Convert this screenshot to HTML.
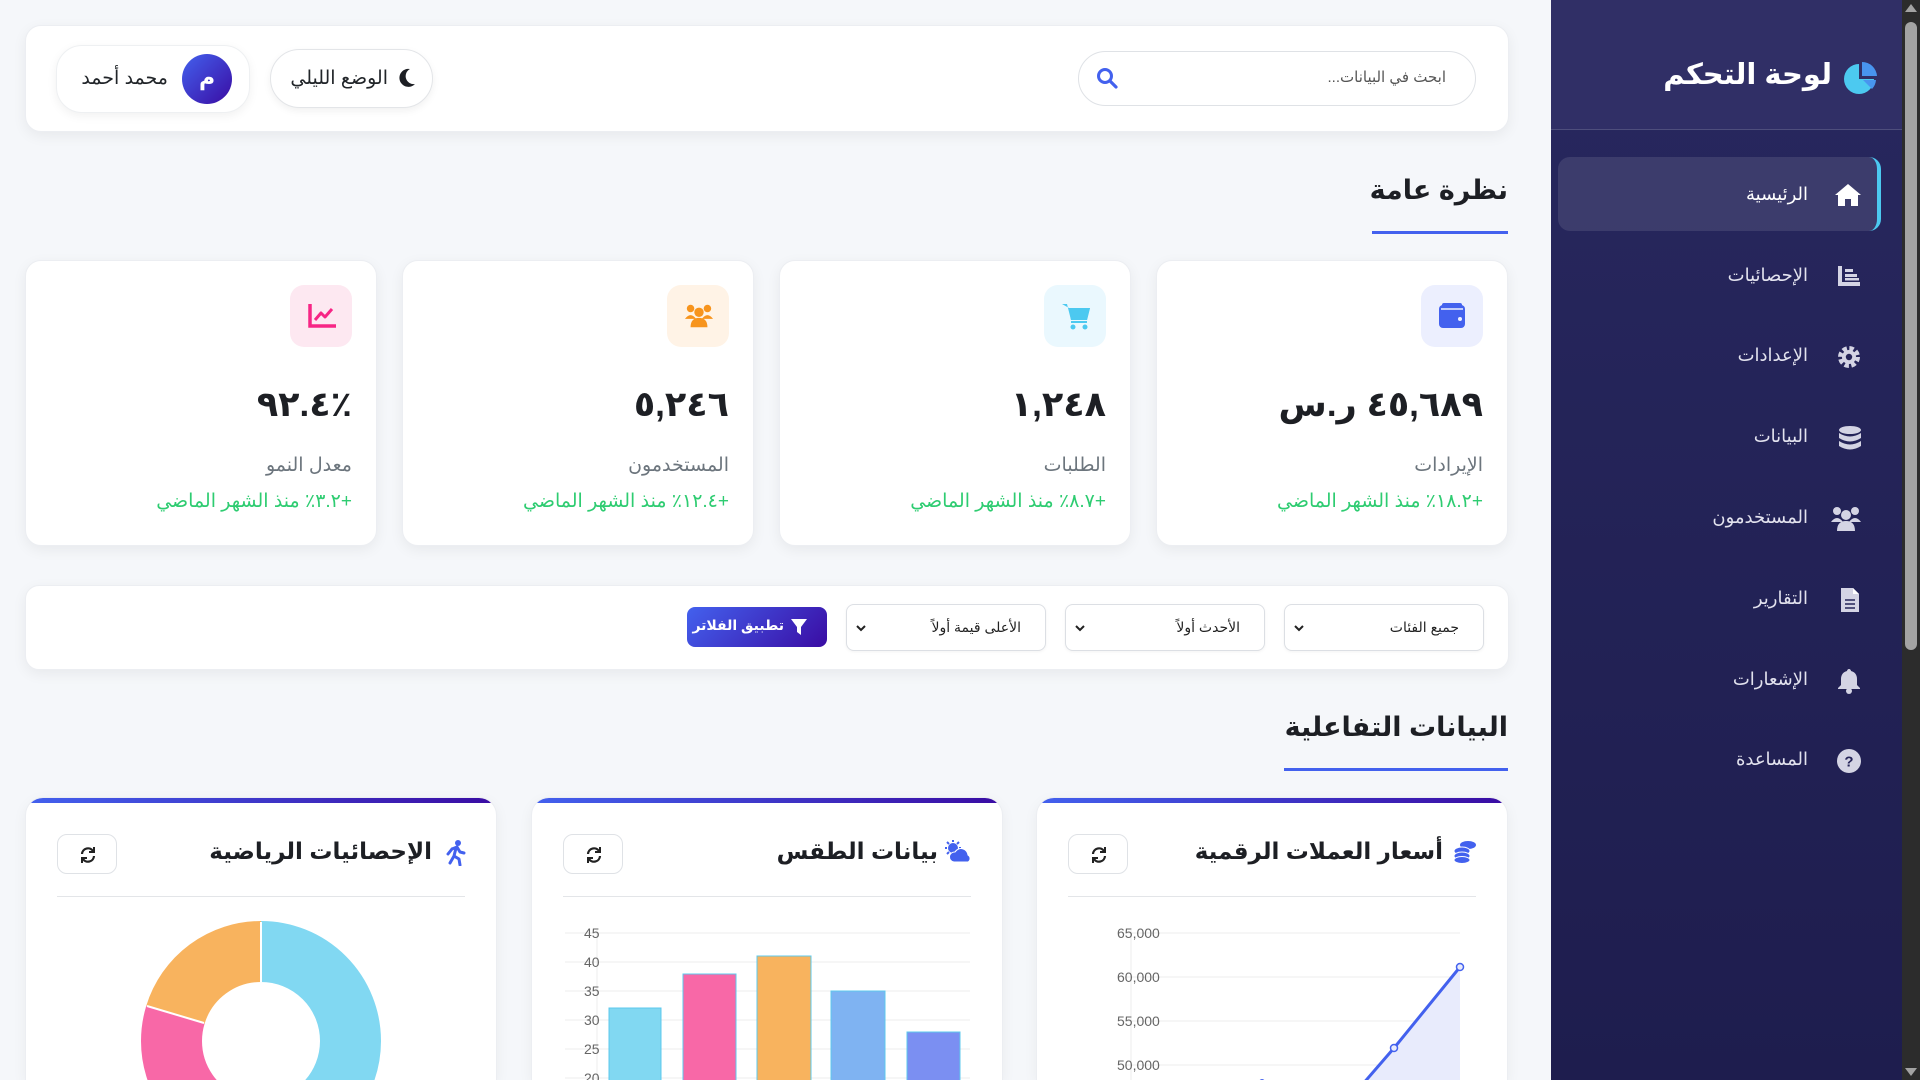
<!DOCTYPE html>
<html lang="ar" dir="rtl"><head><meta charset="utf-8">
<style>
*{box-sizing:border-box;margin:0;padding:0}
html{width:1920px;height:1080px;overflow:hidden}
body{width:1920px;height:1080px;overflow:hidden;background:#f5f7fa;font-family:"Liberation Sans","DejaVu Sans",sans-serif;color:#212529;position:relative}
.a{position:absolute}
.card{position:absolute;background:#fff;border-radius:16px;box-shadow:0 4px 14px rgba(0,0,0,.06);border:1px solid #eceef2}
.t{position:absolute;white-space:nowrap;direction:rtl}
.sb{left:1551px;top:0;width:351px;height:1080px;background:linear-gradient(180deg,#28285f,#1e1d4e)}
.nav{position:absolute;right:0;width:351px;height:40px}
.nav .tx{position:absolute;right:94px;top:9px;font-size:18px;color:#e2e2ee}
.nav svg{position:absolute;right:40px;top:8px}
.stat .ib{position:absolute;right:24px;top:24px;width:62px;height:62px;border-radius:14px}
.stat .ib svg{position:absolute;left:17px;top:17px}
.stat .v{position:absolute;right:24px;top:124px;font-size:35px;font-weight:bold;color:#1d1f24}
.stat .l{position:absolute;right:24px;top:193px;font-size:19px;color:#6c757d}
.stat .c{position:absolute;right:24px;top:229px;font-size:19px;color:#2ecc71}
.sel{position:absolute;top:604px;width:200px;height:47px;border:1px solid #dcdfe4;border-radius:8px;background:#fff;box-shadow:0 1px 3px rgba(0,0,0,.05)}
.sel .tx{position:absolute;right:24px;top:14px;font-size:14px;color:#222}
.sel .ch{position:absolute;left:8px;top:14px}
.cc{position:absolute;top:797px;width:472px;height:283px;background:#fff;border-radius:18px 18px 0 0;border:1px solid #eceef2;border-bottom:none;overflow:hidden;box-shadow:0 4px 14px rgba(0,0,0,.05)}
.cc .bar{position:absolute;left:0;right:0;top:0;height:5px;background:linear-gradient(90deg,#4361ee,#3a0ca3)}
.cc .ti{position:absolute;right:64px;top:40px;font-size:23px;font-weight:bold;color:#1d1f24}
.cc .ic{position:absolute;right:30px;top:42px}
.cc .rb{position:absolute;left:31px;top:36px;width:60px;height:40px;border:1px solid #dfe2e6;border-radius:10px;background:#fff}
.cc .rb svg{position:absolute;left:21px;top:11px}
.cc .hr{position:absolute;left:31px;right:31px;top:98px;height:1px;background:#e3e5e8}
</style></head><body>

<div class="a sb">
  <div class="a" style="left:0;top:0;width:351px;height:130px;background:#302f66;border-bottom:1px solid rgba(255,255,255,.15)"></div>
  <div class="t" style="right:70px;top:57px;font-size:29px;font-weight:bold;color:#fff">لوحة التحكم</div>
  <svg class="a" style="right:24px;top:62px" width="34" height="32" viewBox="0 0 34 32"><path d="M15 2 A15 15 0 1 0 30 17 L15 17Z" fill="#4cc9f0"/><path d="M18 0 A15 15 0 0 1 33 14 L18 14Z" fill="#4895ef"/><path d="M19 18 L32 18 A15 15 0 0 1 28 27Z" fill="#4895ef"/></svg>
  <div class="a" style="left:7px;top:157px;width:323px;height:74px;background:rgba(255,255,255,.1);border-radius:12px;border-right:4px solid #4cc9f0"></div>
  <div class="nav" style="top:175px"><svg width="28" height="24" viewBox="0 0 28 24"><path d="M14 1 L27 12 L24 12 L24 23 L17 23 L17 16 L11 16 L11 23 L4 23 L4 12 L1 12Z" fill="#fff"/></svg><div class="tx" style="color:#fff">الرئيسية</div></div>
  <div class="nav" style="top:256px"><svg width="26" height="24" viewBox="0 0 26 24"><path d="M2 2h4v16h18v4H2z M9 5h8v3H9z M9 10h12v3H9z" fill="#d4d4e4"/><rect x="9" y="14" width="14" height="2.5" fill="#d4d4e4"/></svg><div class="tx">الإحصائيات</div></div>
  <div class="nav" style="top:336px"><svg width="26" height="26" viewBox="0 0 26 26"><circle cx="13" cy="13" r="8" fill="none" stroke="#d4d4e4" stroke-width="6" stroke-dasharray="4 2.3"/><circle cx="13" cy="13" r="7" fill="#d4d4e4"/><circle cx="13" cy="13" r="3.2" fill="#252458"/></svg><div class="tx">الإعدادات</div></div>
  <div class="nav" style="top:417px"><svg width="24" height="26" viewBox="0 0 24 26"><ellipse cx="12" cy="5" rx="11" ry="4" fill="#d4d4e4"/><path d="M1 8 q11 7 22 0 v5 q-11 7 -22 0z M1 16 q11 7 22 0 v5 q-11 7 -22 0z" fill="#d4d4e4"/></svg><div class="tx">البيانات</div></div>
  <div class="nav" style="top:498px"><svg width="32" height="26" viewBox="0 0 32 26"><circle cx="7" cy="5" r="4" fill="#d4d4e4"/><circle cx="25" cy="5" r="4" fill="#d4d4e4"/><circle cx="16" cy="9" r="5" fill="#d4d4e4"/><path d="M1 16 q6 -8 12 0z M19 16 q6 -8 12 0z M7 25 q0 -10 9 -10 q9 0 9 10z" fill="#d4d4e4"/></svg><div class="tx">المستخدمون</div></div>
  <div class="nav" style="top:579px"><svg width="24" height="26" viewBox="0 0 24 26"><path d="M3 1h12l6 6v18H3z" fill="#d4d4e4"/><path d="M15 1v6h6" fill="#fff"/><path d="M7 13h10M7 17h10M7 21h10" stroke="#252458" stroke-width="1.6"/></svg><div class="tx">التقارير</div></div>
  <div class="nav" style="top:660px"><svg width="26" height="26" viewBox="0 0 26 26"><path d="M13 1c1 0 2 1 2 2 c4 1 6 4 6 8v6l3 3v1H2v-1l3-3v-6c0-4 2-7 6-8 0-1 1-2 2-2z" fill="#d4d4e4"/><circle cx="13" cy="23" r="3" fill="#d4d4e4"/></svg><div class="tx">الإشعارات</div></div>
  <div class="nav" style="top:740px"><svg width="26" height="26" viewBox="0 0 26 26"><circle cx="13" cy="13" r="12" fill="#d4d4e4"/><text x="13" y="18.5" text-anchor="middle" font-size="15" font-weight="bold" fill="#252458" font-family="Liberation Sans">?</text></svg><div class="tx">المساعدة</div></div>
</div>
<div class="a" style="left:1902px;top:0;width:18px;height:1080px;background:#2c2c2c"></div>
<div class="a" style="left:1905px;top:22px;width:12px;height:628px;background:#a3a3a3;border-radius:6px"></div>
<div class="a" style="left:1905px;top:4px;width:0;height:0;border-left:6px solid transparent;border-right:6px solid transparent;border-bottom:8px solid #a3a3a3"></div>
<div class="a" style="left:1905px;top:1068px;width:0;height:0;border-left:6px solid transparent;border-right:6px solid transparent;border-top:8px solid #a3a3a3"></div>

<div class="card" style="left:25px;top:25px;width:1484px;height:107px"></div>
<div class="a" style="left:1078px;top:51px;width:398px;height:55px;border:1px solid #dfe2e6;border-radius:28px;background:#fff"></div>
<div class="t" style="right:474px;top:68px;font-size:15px;color:#555">ابحث في البيانات...</div>
<svg class="a" style="left:1096px;top:67px" width="22" height="22" viewBox="0 0 22 22"><circle cx="9" cy="9" r="6.5" fill="none" stroke="#4361ee" stroke-width="3"/><path d="M14 14l6 6" stroke="#4361ee" stroke-width="3.2" stroke-linecap="round"/></svg>
<div class="a" style="left:270px;top:49px;width:163px;height:59px;border:1px solid #e3e5e8;border-radius:30px;background:#fff;box-shadow:0 3px 8px rgba(0,0,0,.06)"></div>
<div class="t" style="right:1532px;top:67px;font-size:19px;color:#212529">الوضع الليلي</div>
<svg class="a" style="left:398px;top:68px" width="18" height="20" viewBox="0 0 18 20"><path d="M12 1 A9 9 0 1 0 17 16 A8 8 0 0 1 12 1Z" fill="#1d1f24"/></svg>
<div class="a" style="left:56px;top:45px;width:194px;height:68px;border:1px solid #eef0f2;border-radius:26px;background:#fff;box-shadow:0 3px 10px rgba(0,0,0,.06)"></div>
<div class="a" style="left:182px;top:54px;width:50px;height:50px;border-radius:50%;background:linear-gradient(135deg,#4361ee,#3a0ca3);color:#fff;font-size:22px;font-weight:bold;text-align:center;line-height:48px">م</div>
<div class="t" style="right:1752px;top:67px;font-size:19px;color:#212529">محمد أحمد</div>

<div class="t" style="right:412px;top:175px;font-size:27px;font-weight:bold;color:#1d1f24">نظرة عامة</div>
<div class="a" style="left:1372px;top:231px;width:136px;height:3px;background:#4361ee"></div>

<div class="card stat" style="left:1156px;top:260px;width:352px;height:286px"><div class="ib" style="background:#eceffe"><svg width="28" height="28" viewBox="0 0 28 28"><rect x="1" y="3" width="26" height="23" rx="4" fill="#4361ee"/><rect x="4" y="1" width="20" height="5" rx="2" fill="#4361ee"/><path d="M3 7h22" stroke="#eceffe" stroke-width="1.5"/><circle cx="22" cy="17" r="2" fill="#eceffe"/></svg></div><div class="v">٤٥,٦٨٩ ر.س</div><div class="l">الإيرادات</div><div class="c">+١٨.٢٪ منذ الشهر الماضي</div></div>
<div class="card stat" style="left:779px;top:260px;width:352px;height:286px"><div class="ib" style="background:#eaf8fe"><svg width="30" height="28" viewBox="0 0 30 28"><path d="M1 2h5l4 16h16l3-12H8" fill="#4cc9f0"/><path d="M8 6h21l-3 12H10z" fill="#4cc9f0"/><path d="M10 20h16" stroke="#4cc9f0" stroke-width="2"/><circle cx="12" cy="25" r="2.5" fill="#4cc9f0"/><circle cx="24" cy="25" r="2.5" fill="#4cc9f0"/></svg></div><div class="v">١,٢٤٨</div><div class="l">الطلبات</div><div class="c">+٨.٧٪ منذ الشهر الماضي</div></div>
<div class="card stat" style="left:402px;top:260px;width:352px;height:286px"><div class="ib" style="background:#fff3e6"><svg width="30" height="28" viewBox="0 0 32 26"><circle cx="7" cy="5" r="4" fill="#f7941d"/><circle cx="25" cy="5" r="4" fill="#f7941d"/><circle cx="16" cy="9" r="5" fill="#f7941d"/><path d="M1 16 q6 -8 12 0z M19 16 q6 -8 12 0z M7 25 q0 -10 9 -10 q9 0 9 10z" fill="#f7941d"/></svg></div><div class="v">٥,٢٤٦</div><div class="l">المستخدمون</div><div class="c">+١٢.٤٪ منذ الشهر الماضي</div></div>
<div class="card stat" style="left:25px;top:260px;width:352px;height:286px"><div class="ib" style="background:#fde8f1"><svg width="30" height="28" viewBox="0 0 30 28"><path d="M3 2v22h26" fill="none" stroke="#f72585" stroke-width="3.5"/><path d="M8 18l6-7 4 4 7-8" fill="none" stroke="#f72585" stroke-width="3" stroke-linejoin="round"/></svg></div><div class="v">٪٩٢.٤</div><div class="l">معدل النمو</div><div class="c">+٣.٢٪ منذ الشهر الماضي</div></div>

<div class="card" style="left:25px;top:585px;width:1484px;height:85px;border-radius:14px"></div>
<div class="sel" style="left:1284px"><div class="tx">جميع الفئات</div><svg class="ch" width="12" height="18" viewBox="0 0 12 18"><path d="M2 7l4 4 4-4" fill="none" stroke="#222" stroke-width="2"/></svg></div>
<div class="sel" style="left:1065px"><div class="tx">الأحدث أولاً</div><svg class="ch" width="12" height="18" viewBox="0 0 12 18"><path d="M2 7l4 4 4-4" fill="none" stroke="#222" stroke-width="2"/></svg></div>
<div class="sel" style="left:846px"><div class="tx">الأعلى قيمة أولاً</div><svg class="ch" width="12" height="18" viewBox="0 0 12 18"><path d="M2 7l4 4 4-4" fill="none" stroke="#222" stroke-width="2"/></svg></div>
<div class="a" style="left:687px;top:607px;width:140px;height:40px;border-radius:8px;background:linear-gradient(135deg,#4361ee,#3a0ca3)"></div>
<div class="t" style="right:1136px;top:617px;font-size:14px;font-weight:bold;color:#fff">تطبيق الفلاتر</div>
<svg class="a" style="left:790px;top:618px" width="18" height="18" viewBox="0 0 18 18"><path d="M1 1h16l-6 8v8l-4-3V9z" fill="#fff"/></svg>

<div class="t" style="right:412px;top:712px;font-size:27px;font-weight:bold;color:#1d1f24">البيانات التفاعلية</div>
<div class="a" style="left:1284px;top:768px;width:224px;height:3px;background:#4361ee"></div>

<div class="cc" style="left:1036px"><div class="bar"></div>
  <svg class="ic" width="24" height="24" viewBox="0 0 24 24"><ellipse cx="15" cy="5" rx="8" ry="4" fill="#4361ee"/><ellipse cx="9" cy="11" rx="8" ry="4" fill="#4361ee" stroke="#fff" stroke-width="1"/><ellipse cx="9" cy="16" rx="8" ry="4" fill="#4361ee" stroke="#fff" stroke-width="1"/><ellipse cx="9" cy="20" rx="8" ry="3.5" fill="#4361ee" stroke="#fff" stroke-width="1"/></svg>
  <div class="ti">أسعار العملات الرقمية</div>
  <div class="rb"><svg width="18" height="18" viewBox="0 0 18 18"><path d="M3 8a6 6 0 0 1 11-3M15 10a6 6 0 0 1-11 3" fill="none" stroke="#222" stroke-width="2.2"/><path d="M15 1v5h-5M3 17v-5h5" fill="none" stroke="#222" stroke-width="2"/></svg></div>
  <div class="hr"></div>
</div>
<div class="cc" style="left:531px"><div class="bar"></div>
  <svg class="ic" width="28" height="24" viewBox="0 0 28 24"><circle cx="9" cy="8" r="5" fill="#4361ee"/><path d="M9 0v2M9 14v2M1 8h2M15 8h2M3 2l2 2M15 2l-2 2M3 14l2-2" stroke="#4361ee" stroke-width="2"/><path d="M10 22a5 5 0 0 1 1-10a7 7 0 0 1 13 3a4 4 0 0 1 0 7z" fill="#4361ee" stroke="#fff" stroke-width="1"/></svg>
  <div class="ti">بيانات الطقس</div>
  <div class="rb"><svg width="18" height="18" viewBox="0 0 18 18"><path d="M3 8a6 6 0 0 1 11-3M15 10a6 6 0 0 1-11 3" fill="none" stroke="#222" stroke-width="2.2"/><path d="M15 1v5h-5M3 17v-5h5" fill="none" stroke="#222" stroke-width="2"/></svg></div>
  <div class="hr"></div>
</div>
<div class="cc" style="left:25px"><div class="bar"></div>
  <svg class="ic" width="22" height="26" viewBox="0 0 22 26"><circle cx="14" cy="3" r="3" fill="#4361ee"/><path d="M8 9l5-2 3 5 4 1M12 8l-2 8 5 3 1 6M10 16l-4 7M8 9l-4 5" fill="none" stroke="#4361ee" stroke-width="3" stroke-linecap="round" stroke-linejoin="round"/></svg>
  <div class="ti">الإحصائيات الرياضية</div>
  <div class="rb"><svg width="18" height="18" viewBox="0 0 18 18"><path d="M3 8a6 6 0 0 1 11-3M15 10a6 6 0 0 1-11 3" fill="none" stroke="#222" stroke-width="2.2"/><path d="M15 1v5h-5M3 17v-5h5" fill="none" stroke="#222" stroke-width="2"/></svg></div>
  <div class="hr"></div>
</div>

<svg class="a" style="left:0;top:900px" width="1520" height="180" viewBox="0 900 1520 180" font-family="Liberation Sans" font-size="14" fill="#666">
  <g transform="rotate(-90 261 1041)">
    <circle cx="261" cy="1041" r="89.5" fill="none" stroke="#81d8f2" stroke-width="61" stroke-dasharray="312.4 1000"/>
    <circle cx="261" cy="1041" r="89.5" fill="none" stroke="#f868a7" stroke-width="61" stroke-dasharray="0 312.4 135.9 1000"/>
    <circle cx="261" cy="1041" r="89.5" fill="none" stroke="#f8b35e" stroke-width="61" stroke-dasharray="0 448.3 114 1000"/>
  </g>
  <path d="M261 922v60M147 1006l57 17" stroke="#fff" stroke-width="2"/>
  <g stroke="#ececec" stroke-width="1"><path d="M565 933h405M565 962h405M565 991h405M565 1020h405M565 1049h405M565 1078h405"/><path d="M597 930v150"/></g>
  <g text-anchor="end"><text x="584" y="938">45</text><text x="584" y="967">40</text><text x="584" y="996">35</text><text x="584" y="1025">30</text><text x="584" y="1054">25</text><text x="584" y="1083">20</text></g>
  <rect x="609" y="1008" width="52" height="80" fill="#81d8f2" stroke="#5cc8ec"/>
  <rect x="683" y="974" width="53" height="110" fill="#f868a7" stroke="#5cc8ec"/>
  <rect x="757" y="956" width="54" height="130" fill="#f8b35e" stroke="#5cc8ec"/>
  <rect x="831" y="991" width="54" height="100" fill="#7fb3f2" stroke="#5cc8ec"/>
  <rect x="907" y="1032" width="53" height="60" fill="#7b8ff2" stroke="#5cc8ec"/>
  <g stroke="#ececec" stroke-width="1"><path d="M1125 933h335M1125 977h335M1125 1021h335M1125 1065h335"/><path d="M1131 930v150"/></g>
  <g text-anchor="end"><text x="1117" y="938">65,000</text><text x="1117" y="982">60,000</text><text x="1117" y="1026">55,000</text><text x="1117" y="1070">50,000</text></g>
  <path d="M1362 1085 L1394 1048 L1460 967 L1460 1085Z" fill="#e8ebfc"/>
  <path d="M1362 1085 L1394 1048 L1460 967" fill="none" stroke="#4361ee" stroke-width="3"/>
  <circle cx="1394" cy="1048" r="3.5" fill="#e8ebfc" stroke="#4361ee" stroke-width="1.5"/>
  <circle cx="1460" cy="967" r="3.5" fill="#e8ebfc" stroke="#4361ee" stroke-width="1.5"/>
  <circle cx="1262" cy="1082" r="3" fill="#4361ee"/>
</svg>
</body></html>
